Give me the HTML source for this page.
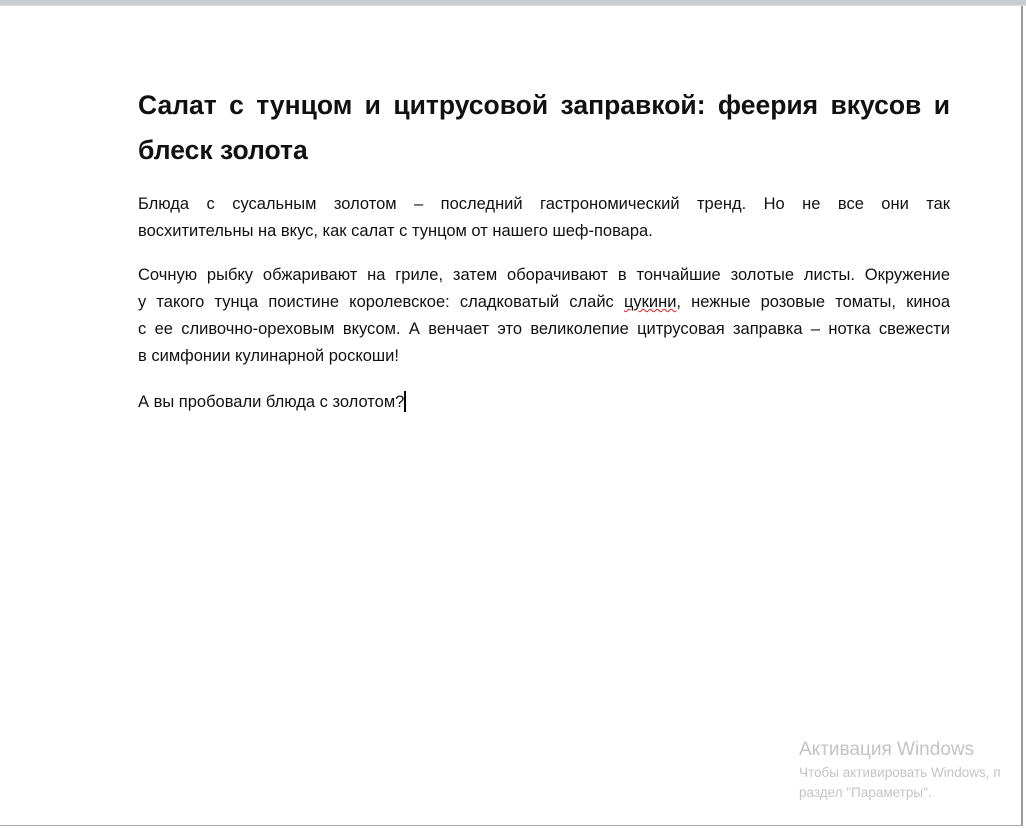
<!DOCTYPE html>
<html><head><meta charset="utf-8"><style>
html,body{margin:0;padding:0;background:#fff;}
body{width:1026px;height:828px;position:relative;overflow:hidden;font-family:"Liberation Sans",sans-serif;color:#111;}
.top{position:absolute;left:0;top:0;width:1026px;height:5px;background:#c8cbd0;border-bottom:1px solid #dde0e2;}
.rb{position:absolute;left:1021px;top:6px;width:2px;height:820px;background:#9a9a9a;}
.bb{position:absolute;left:0;top:825px;width:1022px;height:1px;background:#aaa;}
.l{position:absolute;left:138px;width:812px;white-space:nowrap;text-align:justify;text-align-last:justify;}
.l.last{text-align-last:left;}
.h{font-weight:bold;font-size:26.5px;}
.p{font-size:16.5px;}
.u{text-decoration:underline wavy #e02020;text-decoration-thickness:1px;}
.cur{display:inline-block;width:1.5px;height:21px;background:#000;vertical-align:-5px;}
.wm{position:absolute;color:#c4c4c4;white-space:nowrap;}
</style></head><body>
<div class="top"></div><div class="rb"></div><div class="bb"></div>
<div class="l h" style="top:90px">Салат с тунцом и цитрусовой заправкой: феерия вкусов и</div>
<div class="l h last" style="top:135px">блеск золота</div>
<div class="l p" style="top:195px">Блюда с сусальным золотом – последний гастрономический тренд. Но не все они так</div>
<div class="l p last" style="top:222px">восхитительны на вкус, как салат с тунцом от нашего шеф-повара.</div>
<div class="l p" style="top:266px">Сочную рыбку обжаривают на гриле, затем оборачивают в тончайшие золотые листы. Окружение</div>
<div class="l p" style="top:293px">у такого тунца поистине королевское: сладковатый слайс <span class="u">цукини</span>, нежные розовые томаты, киноа</div>
<div class="l p" style="top:320px">с ее сливочно-ореховым вкусом. А венчает это великолепие цитрусовая заправка – нотка свежести</div>
<div class="l p last" style="top:347px">в симфонии кулинарной роскоши!</div>
<div class="l p last" style="top:391px">А вы пробовали блюда с золотом?<span class="cur"></span></div>
<div class="wm" style="left:799px;top:739px;font-size:19px;">Активация Windows</div>
<div class="wm" style="left:799px;top:765px;font-size:13.5px;">Чтобы активировать Windows, п</div>
<div class="wm" style="left:799px;top:785px;font-size:13.5px;">раздел "Параметры".</div>
</body></html>
